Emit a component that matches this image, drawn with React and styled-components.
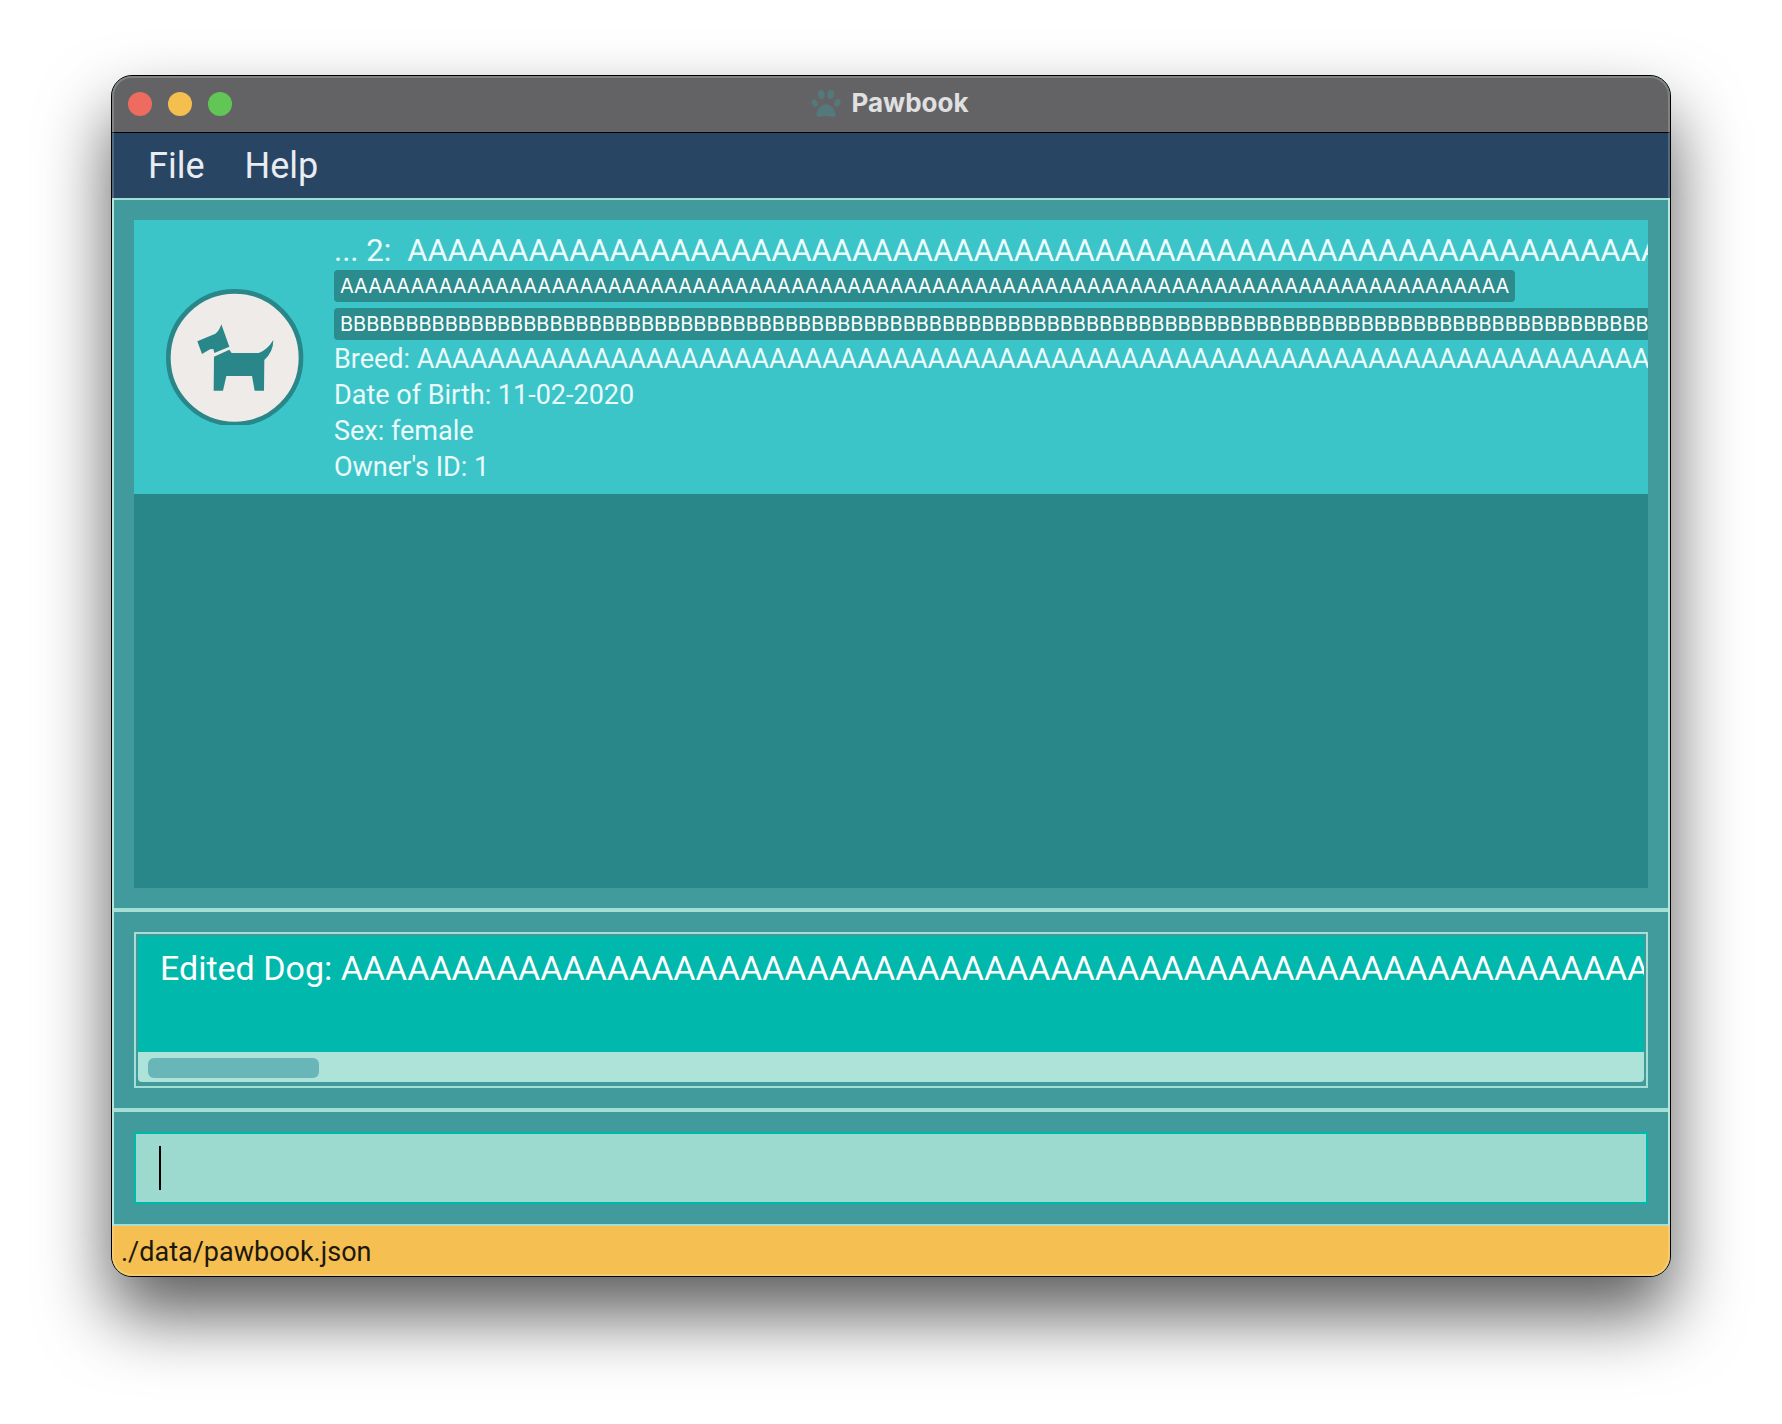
import React from 'react';
import styled, { createGlobalStyle } from 'styled-components';

const GlobalStyle = createGlobalStyle`
  *, *::before, *::after { box-sizing: border-box; }
  body { margin: 0; background: #fff; font-family: Roboto, "Liberation Sans", sans-serif; }
  button, input, textarea { font: inherit; }
`;

const Page = styled.div`
  display: flex;
  min-height: 100vh;
  padding: 75px 111px 147px;
  overflow: hidden;
`;

const Window = styled.main`
  position: relative;
  display: flex;
  flex: 1;
  flex-direction: column;
  min-width: 0;
  overflow: hidden;
  border: 1px solid #000;
  border-radius: 21px;
  background: #419a9b;
  box-shadow: 0 38px 70px rgba(0, 0, 0, 0.64);

  &::after {
    content: '';
    position: absolute;
    inset: 0;
    border: 2px solid rgba(255, 255, 255, 0.2);
    border-radius: 20px;
    pointer-events: none;
  }
`;

const TitleBar = styled.header`
  display: grid;
  grid-template-columns: 1fr auto 1fr;
  align-items: center;
  height: 57px;
  padding: 0 16px;
  border-bottom: 1px solid #000;
  background: #636365;
`;

const Lights = styled.div`
  display: flex;
  gap: 16px;
`;

const Light = styled.button`
  width: 24px;
  height: 24px;
  padding: 0;
  border: 0;
  border-radius: 50%;
  background: ${(p) => p.$color};
`;

const Title = styled.h1`
  display: flex;
  align-items: center;
  gap: 10px;
  margin: 0;
  padding: 0 2px 2px 0;
  color: #e0e0e1;
  font-family: Inter, "Liberation Sans", sans-serif;
  font-size: 26px;
  font-weight: 700;
  line-height: 32px;
`;

const Paw = styled.svg`
  width: 30px;
  height: 29px;
  fill: #55787a;
`;

const MenuBar = styled.nav`
  display: flex;
  gap: 40px;
  height: 65px;
  padding: 0 36px;
  background: #284564;
`;

const MenuButton = styled.button`
  padding: 0;
  border: 0;
  background: none;
  color: #e9ecf0;
  font-size: 36px;
  line-height: 64px;
`;

const Pane = styled.section`
  display: flex;
  flex: ${(p) => (p.$grow ? '1' : 'none')};
  flex-direction: column;
  padding: 20px;
  border: 2px solid #a3dfd4;
`;

const PetList = styled.ul`
  flex: 1;
  margin: 0;
  padding: 0;
  list-style: none;
  background: #298789;
`;

const PetCard = styled.li`
  display: flex;
  align-items: center;
  gap: 30px;
  height: 274px;
  padding-left: 31px;
  overflow: hidden;
  background: #3bc5c9;
  color: #ebfafa;
`;

const Avatar = styled.svg`
  flex: none;
  width: 139px;
  height: 136px;
`;

const Details = styled.div`
  flex: 1;
  min-width: 0;
  overflow: hidden;
  white-space: nowrap;
`;

const PetName = styled.h2`
  display: flex;
  gap: 16px;
  height: 40px;
  margin: 0;
  font-size: 31px;
  font-weight: 400;
  line-height: 42px;
`;

const Tags = styled.div`
  display: flex;
  flex-direction: column;
  align-items: flex-start;
  gap: 6px;
`;

const Tag = styled.span`
  height: 32px;
  padding: 0 6px;
  border-radius: 4px;
  background: #2b8b8d;
  color: #fff;
  font-family: Inter, "Liberation Sans", sans-serif;
  font-size: 20px;
  line-height: 32px;
`;

const Field = styled.p`
  height: 36px;
  margin: 0;
  font-size: 27px;
  line-height: 38px;
`;

const ResultFrame = styled.div`
  padding: 2px 2px 4px;
  border: 2px solid #a3dfd4;
`;

const ResultText = styled.textarea`
  display: block;
  width: 100%;
  height: 116px;
  padding: 12px 0 0 22px;
  overflow: hidden;
  border: 0;
  outline: 0;
  resize: none;
  white-space: pre;
  background: #00b8ab;
  color: #fff;
  font-size: 34px;
  line-height: 40px;
`;

const ScrollTrack = styled.div`
  height: 30px;
  padding: 6px 10px 4px;
  border-radius: 0 0 4px 4px;
  background: #aee3da;
`;

const ScrollThumb = styled.div`
  width: 171px;
  height: 20px;
  border-radius: 6px;
  background: #69b6b8;
`;

const CommandBox = styled.div`
  display: flex;
  align-items: center;
  height: 72px;
  padding: 0 23px;
  border: 2px solid #00b8ab;
  background: #9cdacf;
`;

const Caret = styled.span`
  width: 2px;
  height: 44px;
  background: #000;
`;

const CommandInput = styled.input`
  flex: 1;
  min-width: 0;
  height: 44px;
  padding: 0;
  border: 0;
  outline: 0;
  background: none;
  color: #000;
  caret-color: transparent;
  font-size: 34px;
`;

const StatusBar = styled.footer`
  height: 50px;
  padding: 0 9px;
  background: #f5bf52;
  color: #1c180c;
  font-size: 27px;
  line-height: 52px;
`;

const NAME = 'A'.repeat(100);
const TAGS = ['A'.repeat(83), 'B'.repeat(120)];

function PawIcon() {
  return (
    <Paw viewBox="10 17 90 86" aria-hidden="true">
      <ellipse cx="21" cy="59" rx="9" ry="12" transform="rotate(-22 21 59)" />
      <ellipse cx="41" cy="33" rx="10" ry="14" transform="rotate(-8 41 33)" />
      <ellipse cx="69" cy="33" rx="10" ry="14" transform="rotate(8 69 33)" />
      <ellipse cx="89" cy="58" rx="9" ry="12" transform="rotate(22 89 58)" />
      <path d="M55 62 C68 62 76 71 82 84 C87 95 81 102 72 100 C60 97 50 97 38 100 C29 102 23 95 28 84 C34 71 42 62 55 62 Z" />
    </Paw>
  );
}

function DogAvatar() {
  return (
    <Avatar viewBox="45 27 417 408" role="img" aria-label="Dog">
      <circle cx="254" cy="233" r="199" fill="#eeebe8" stroke="#298789" strokeWidth="14" />
      <g fill="#298789">
        <path d="M142 184 L196 161 Q208 153 214 133 L238 200 L193 219 L190 207 L180 208 L156 222 Z" />
        <path d="M192 230 L238 209 L245 219 L326 219 Q352 210 370 180 Q370 215 343 240 L342 332 L314 332 L306 288 L229 288 L219 332 L191 332 Z" />
      </g>
    </Avatar>
  );
}

export default function App() {
  return (
    <>
      <GlobalStyle />
      <Page>
        <Window>
          <TitleBar>
            <Lights>
              <Light $color="#ed6b5f" aria-label="Close" />
              <Light $color="#f5bf4f" aria-label="Minimize" />
              <Light $color="#62c656" aria-label="Zoom" />
            </Lights>
            <Title>
              <PawIcon />
              Pawbook
            </Title>
          </TitleBar>
          <MenuBar>
            <MenuButton>File</MenuButton>
            <MenuButton>Help</MenuButton>
          </MenuBar>
          <Pane $grow>
            <PetList>
              <PetCard>
                <DogAvatar />
                <Details>
                  <PetName>
                    <span>... 2:</span>
                    <span>{NAME}</span>
                  </PetName>
                  <Tags>
                    {TAGS.map((tag) => (
                      <Tag key={tag}>{tag}</Tag>
                    ))}
                  </Tags>
                  <Field>Breed: {NAME}</Field>
                  <Field>Date of Birth: 11-02-2020</Field>
                  <Field>Sex: female</Field>
                  <Field>Owner's ID: 1</Field>
                </Details>
              </PetCard>
            </PetList>
          </Pane>
          <Pane>
            <ResultFrame>
              <ResultText
                readOnly
                wrap="off"
                aria-label="Result"
                value={`Edited Dog: ${NAME}`}
              />
              <ScrollTrack>
                <ScrollThumb />
              </ScrollTrack>
            </ResultFrame>
          </Pane>
          <Pane>
            <CommandBox>
              <Caret />
              <CommandInput aria-label="Command" />
            </CommandBox>
          </Pane>
          <StatusBar>./data/pawbook.json</StatusBar>
        </Window>
      </Page>
    </>
  );
}
